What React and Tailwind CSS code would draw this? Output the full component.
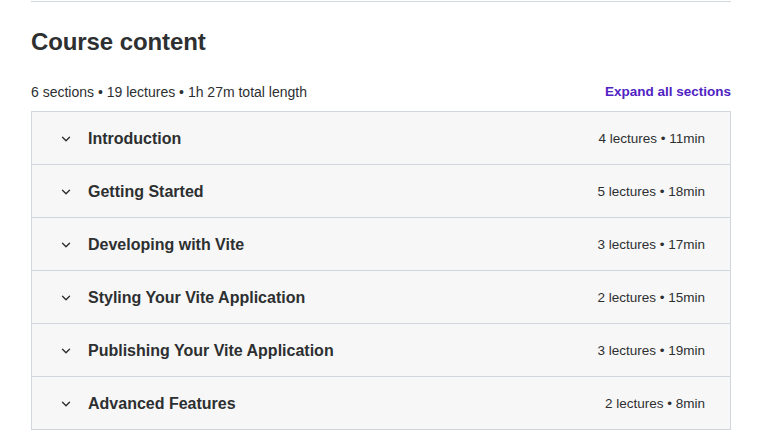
import React from "react";

const sections = [
  ["Introduction", "4 lectures • 11min"],
  ["Getting Started", "5 lectures • 18min"],
  ["Developing with Vite", "3 lectures • 17min"],
  ["Styling Your Vite Application", "2 lectures • 15min"],
  ["Publishing Your Vite Application", "3 lectures • 19min"],
  ["Advanced Features", "2 lectures • 8min"],
];

function Chevron() {
  return (
    <svg width="10" height="10" viewBox="0 0 10 10" fill="none" className="shrink-0">
      <path d="M1.5 3.2 L5 6.7 L8.5 3.2" stroke="#2d2f31" strokeWidth="1.4" strokeLinecap="round" strokeLinejoin="round" />
    </svg>
  );
}

export default function App() {
  return (
    <div className="w-[760px] h-[435px] bg-white overflow-hidden" style={{ fontFamily: '"Liberation Sans", Arial, sans-serif' }}>
      <div className="ml-[31px] w-[700px]">
        <div className="h-px bg-[#d1d7dc] mt-px" />
        <h2 className="mt-[25px] text-[24px] leading-[30px] font-bold text-[#2d2f31] tracking-[-0.1px]">Course content</h2>
        <div className="mt-[26px] flex items-center justify-between text-[14px] leading-[18px] text-[#2d2f31]">
          <span>6 sections • 19 lectures • 1h 27m total length</span>
          <span className="font-bold text-[#5022c3] text-[13.5px]">Expand all sections</span>
        </div>
        <div className="mt-[10px] border border-[#d1d7dc]">
          {sections.map(([t, m], i) => (
            <div
              key={t}
              className={`flex items-center bg-[#f7f7f7] pl-[29px] pr-[25px] pt-[2px] ${i > 0 ? "h-[53px] border-t border-[#d1d7dc]" : "h-[52px]"}`}
            >
              <Chevron />
              <span className="ml-[17px] text-[16px] font-bold text-[#2d2f31]">{t}</span>
              <span className="ml-auto text-[13.5px] text-[#2d2f31]">{m}</span>
            </div>
          ))}
        </div>
      </div>
    </div>
  );
}
